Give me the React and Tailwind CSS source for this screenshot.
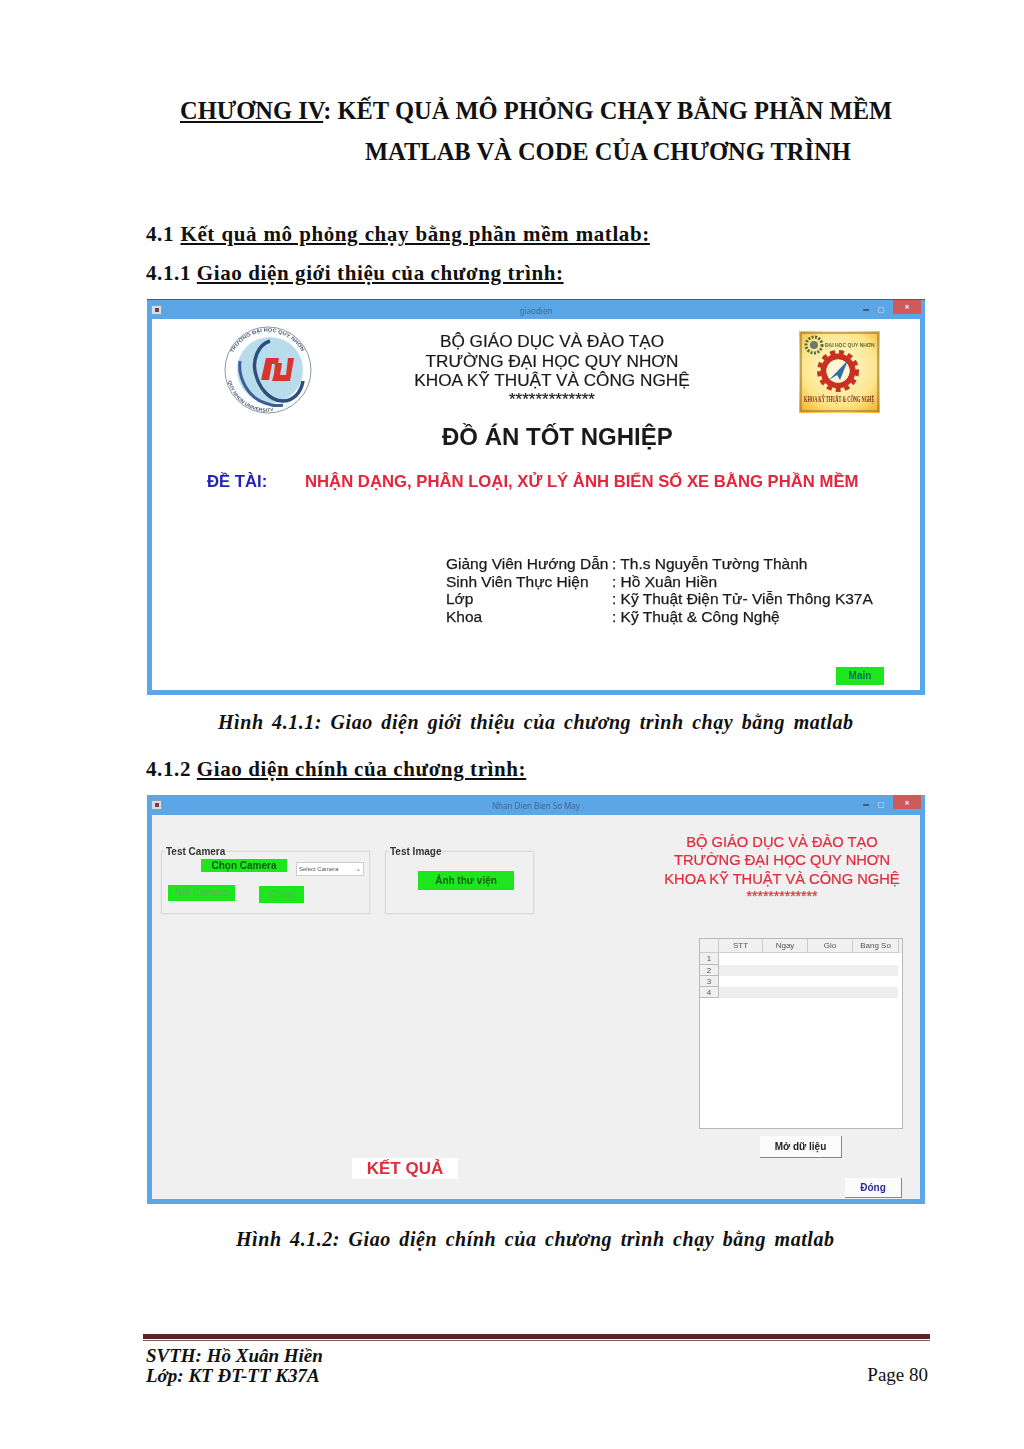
import React from 'react';

const serif = { fontFamily: '"Liberation Serif", "Times New Roman", serif' };

// --- logos ---
const UniLogo = () => (
  <svg width="90" height="90" viewBox="0 0 90 90" className="shrink-0">
    <defs>
      <path id="ringTop" d="M10 28 A39 39 0 0 1 82 34" />
      <path id="ringBottom" d="M5 56 A41 41 0 0 0 62 83" />
    </defs>
    <circle cx="45" cy="45" r="43" fill="#fff" stroke="#8a98a8" strokeWidth="1" />
    <circle cx="47" cy="45" r="33" fill="#b9dcec" />
    <text fontSize="5" fontWeight="700" fill="#4a5a74" fontFamily="Liberation Sans, sans-serif">
      <textPath href="#ringTop" textLength="84" lengthAdjust="spacingAndGlyphs">TRƯỜNG ĐẠI HỌC QUY NHƠN</textPath>
    </text>
    <text fontSize="4.6" fontWeight="700" fill="#4a5a74" fontFamily="Liberation Sans, sans-serif">
      <textPath href="#ringBottom" textLength="60" lengthAdjust="spacingAndGlyphs">QUY NHON UNIVERSITY</textPath>
    </text>
    <path d="M17 36 C15 52 24 72 42 78 C50 81 56 81 60 80" fill="none" stroke="#3a5f98" strokeWidth="3" />
    <path d="M47 16 C34 20 30 36 32 46 C35 62 46 76 60 76 C70 76 78 68 80 56" fill="none" stroke="#2f4e7c" strokeWidth="3.5" />
    <path d="M43 33 L56 33 L55 39 L49 39 L46 55 L38 55 Z" fill="#d8352f" />
    <path d="M59 38 L57 50 L63 50 L65 33 L71 33 L67 56 L49 56 L51 49 L52 38 Z" fill="#d8352f" />
  </svg>
);

const FacultyLogo = () => (
  <svg width="81" height="82" viewBox="0 0 81 82" className="shrink-0">
    <defs>
      <radialGradient id="gold" cx="50%" cy="45%" r="70%">
        <stop offset="0%" stopColor="#fffbe0" />
        <stop offset="65%" stopColor="#fde58a" />
        <stop offset="100%" stopColor="#f5b324" />
      </radialGradient>
    </defs>
    <rect x="0" y="0" width="81" height="82" fill="url(#gold)" />
    <rect x="2" y="2" width="77" height="78" fill="none" stroke="#8a6a38" strokeWidth="1" />
    <circle cx="15" cy="14" r="8" fill="none" stroke="#4f6b3a" strokeWidth="3" strokeDasharray="2 1.5" />
    <circle cx="15" cy="14" r="4" fill="#6b7a68" />
    <text x="26" y="16" fontSize="5" fontWeight="700" fill="#5e6a38" fontFamily="Liberation Sans, sans-serif">ĐẠI HỌC QUY NHƠN</text>
    <circle cx="39" cy="40" r="19" fill="none" stroke="#c9301f" strokeWidth="4" strokeDasharray="5 4" />
    <circle cx="39" cy="40" r="14.5" fill="none" stroke="#c9301f" strokeWidth="6" />
    <circle cx="39" cy="40" r="11.5" fill="#fff6d8" />
    <path d="M49 29 L41 49 L38 44 L30 49 Z" fill="#2f6fa8" />
    <g transform="translate(5 71) scale(0.55 1)">
      <text fontSize="8" fontWeight="700" fill="#7a2a1a" fontFamily="Liberation Serif, serif">KHOA KỸ THUẬT &amp; CÔNG NGHỆ</text>
    </g>
  </svg>
);

// --- window chrome ---
const Titlebar = ({ title, edge }) => (
  <div className={`h-[20px] shrink-0 flex items-center pl-[4px] pr-[4px] bg-[#5aa6e6] ${edge}`}>
    <div className="w-[70px]">
      <div className="w-[11px] h-[10px] bg-[#d5dee6] border border-[#8ba3b6] flex items-center justify-center">
        <div className="w-[4px] h-[4px] bg-[#7a4040]" />
      </div>
    </div>
    <div className="flex-1 text-center text-[8px] text-[#44688a] pt-[2px]">{title}</div>
    <div className="w-[70px] flex items-center justify-end gap-[9px]">
      <div className="w-[6px] h-[2px] bg-[#44607a]" />
      <div className="w-[6px] h-[6px] border border-[#9cc4e6]" />
      <div className="w-[28px] h-[14px] -mt-[6px] bg-[#cf5a5a] flex items-center justify-center text-white text-[9px] font-bold leading-none">×</div>
    </div>
  </div>
);

const GroupBox = ({ title, className, children }) => (
  <div className={`relative border border-[#d9d9d9] shadow-[0_0_1px_#ccc] ${className}`}>
    <span className="absolute -top-[6px] left-[3px] bg-[#f0f0f0] text-[10px] leading-[12px] font-bold text-[#333] px-[1px]">{title}</span>
    {children}
  </div>
);

const Section = ({ children, spread }) => (
  <div style={serif} className={`text-[21px] leading-[24px] font-bold tracking-[0.6px] text-[#111] decoration-2 ${spread}`}>{children}</div>
);

const Caption = ({ children, pad }) => (
  <div style={serif} className={`text-[20px] leading-[24px] font-bold italic tracking-[0.55px] text-[#111] [word-spacing:3px] ${pad}`}>{children}</div>
);

const rows = [
  ['Giảng Viên Hướng Dẫn', ': Th.s Nguyễn Tường Thành'],
  ['Sinh Viên Thực Hiện', ': Hồ Xuân Hiền'],
  ['Lớp', ': Kỹ Thuật Điện Tử- Viễn Thông K37A'],
  ['Khoa', ': Kỹ Thuật & Công Nghệ'],
];

const IntroWindow = () => (
  <div className="w-[778px] h-[396px] bg-[#5aa6e6] flex flex-col blur-[0.4px]">
    <Titlebar title="giaodien" edge="border-t border-[#3f5f7a]" />
    <div className="flex-1 mx-[5px] mb-[5px] bg-white flex flex-col" style={{ fontFamily: '"Liberation Sans", Arial, sans-serif' }}>
      <div className="flex items-start pt-[6px] pl-[71px]">
        <UniLogo />
        <div className="w-[400px] ml-[39px] pt-[7px] text-center text-[17.2px] leading-[19.5px] text-[#1a1a1a] [-webkit-text-stroke:0.2px_#1a1a1a]">
          <div>BỘ GIÁO DỤC VÀ ĐÀO TẠO</div>
          <div>TRƯỜNG ĐẠI HỌC QUY NHƠN</div>
          <div>KHOA KỸ THUẬT VÀ CÔNG NGHỆ</div>
          <div className="text-[17px] leading-[14px] mt-[2px]">*************</div>
        </div>
        <div className="ml-[47px] pt-[6px]"><FacultyLogo /></div>
      </div>
      <div className="mt-[7px] pl-[290px] text-[24px] leading-[30px] font-bold text-[#1a1a1a]">ĐỒ ÁN TỐT NGHIỆP</div>
      <div className="mt-[20px] flex pl-[55px] text-[16.7px] leading-[20px] font-bold">
        <span className="w-[98px] text-[#2222bb]">ĐỀ TÀI:</span>
        <span className="text-[#e8243c]">NHẬN DẠNG, PHÂN LOẠI, XỬ LÝ ẢNH BIỂN SỐ XE BẰNG PHẦN MỀM</span>
      </div>
      <div className="mt-[63px] ml-[294px] text-[15.5px] leading-[17.7px] text-[#1a1a1a] [-webkit-text-stroke:0.25px_#1a1a1a]">
        {rows.map(([k, v]) => (
          <div key={k} className="flex">
            <span className="w-[166px]">{k}</span>
            <span>{v}</span>
          </div>
        ))}
      </div>
      <div className="flex justify-end mt-[41px] pr-[36px]">
        <div className="w-[48px] h-[18px] bg-[#1ee61e] text-[#0a6a5a] text-[10px] leading-[18px] font-bold text-center">Main</div>
      </div>
    </div>
  </div>
);

const MainWindow = () => (
  <div className="w-[778px] h-[409px] bg-[#5aa6e6] flex flex-col blur-[0.4px]">
    <Titlebar title="Nhan Dien Bien So May" />
    <div className="flex-1 mx-[5px] mb-[5px] bg-[#f0f0f0] flex" style={{ fontFamily: '"Liberation Sans", Arial, sans-serif' }}>
      <div className="w-[510px] flex flex-col">
        <div className="flex pt-[36px] pl-[9px] gap-[15px]">
          <GroupBox title="Test Camera" className="w-[209px] h-[63px] pt-[7px] pl-[6px]">
            <div className="flex items-start pl-[33px]">
              <div className="w-[86px] h-[13px] bg-[#1ee61e] text-[#0e5a0e] text-[10px] leading-[13px] font-bold text-center">Chọn Camera</div>
              <div className="w-[68px] h-[14px] ml-[9px] mt-[3px] bg-white border border-[#ccc] flex items-center justify-between px-[2px] text-[6px] text-[#555]">
                <span>Select Camera</span><span>⌄</span>
              </div>
            </div>
            <div className="flex items-start mt-[9px]">
              <div className="w-[67px] h-[16px] bg-[#1ee61e] text-[#5ab05a] text-[10px] leading-[16px] text-center">Nối Camera</div>
              <div className="w-[45px] h-[17px] ml-[24px] mt-[1px] bg-[#1ee61e] text-[#5ab05a] text-[10px] leading-[17px] text-center">Chụp</div>
            </div>
          </GroupBox>
          <GroupBox title="Test Image" className="w-[149px] h-[63px] pt-[19px] pl-[32px]">
            <div className="w-[96px] h-[19px] bg-[#1ee61e] text-[#145c14] text-[10px] leading-[19px] font-bold text-center">Ảnh thư viện</div>
          </GroupBox>
        </div>
        <div className="mt-[244px] ml-[200px] w-[106px] h-[21px] bg-white text-[#e02c3c] text-[17px] leading-[21px] font-bold text-center">KẾT QUẢ</div>
      </div>
      <div className="flex-1 flex flex-col">
        <div className="pt-[18px] w-[240px] text-center text-[14.7px] leading-[18.4px] text-[#e02c3c] [-webkit-text-stroke:0.2px_#e02c3c]">
          <div>BỘ GIÁO DỤC VÀ ĐÀO TẠO</div>
          <div>TRƯỜNG ĐẠI HỌC QUY NHƠN</div>
          <div>KHOA KỸ THUẬT VÀ CÔNG NGHỆ</div>
          <div className="text-[14px] leading-[12px] mt-[2px]">*************</div>
        </div>
        <div className="ml-[37px] mt-[36px] w-[204px] h-[191px] bg-white border border-[#b8b8b8] text-[8px] text-[#555]">
          <div className="flex h-[14px] bg-[#f0f0f0]">
            {[['', 'w-[19px]'], ['STT', 'w-[44px]'], ['Ngay', 'w-[45px]'], ['Gio', 'w-[45px]'], ['Bang So', 'w-[46px]']].map(([h, w]) => (
              <div key={h} className={`${w} border-r border-b border-[#ccc] text-center leading-[14px]`}>{h}</div>
            ))}
          </div>
          {[1, 2, 3, 4].map(n => (
            <div key={n} className="flex h-[11.3px]">
              <div className="w-[19px] bg-[#f0f0f0] border-r border-b border-[#bbb] text-center leading-[11px]">{n}</div>
              <div className={`w-[179px] ${n % 2 === 0 ? 'bg-[#eeeeee]' : 'bg-white'}`} />
            </div>
          ))}
        </div>
        <div className="ml-[98px] mt-[7px] w-[82px] h-[22px] bg-[#fbfbfb] border-r border-b border-[#888] text-[#222] text-[10px] leading-[22px] font-bold text-center">Mở dữ liệu</div>
        <div className="ml-[183px] mt-[20px] w-[57px] h-[20px] bg-[#fbfbfb] border-r border-b border-[#888] text-[#2c2c9c] text-[10px] leading-[20px] font-bold text-center">Đóng</div>
      </div>
    </div>
  </div>
);

export default function App() {
  return (
    <div className="w-[1024px] h-[1449px] bg-white relative overflow-hidden">
      <div style={serif} className="pt-[90px] text-[24.5px] leading-[41px] font-bold text-[#111]">
        <div className="pl-[180px]"><span className="underline">CHƯƠNG IV</span>: KẾT QUẢ MÔ PHỎNG CHẠY BẰNG PHẦN MỀM</div>
        <div className="pl-[365px]">MATLAB VÀ CODE CỦA CHƯƠNG TRÌNH</div>
      </div>

      <div className="pl-[146px] mt-[50px]">
        <Section spread="[word-spacing:0.6px]">4.1 <span className="underline">Kết quả mô phỏng chạy bằng phần mềm matlab:</span></Section>
        <div className="mt-[15px]"><Section>4.1.1 <span className="underline">Giao diện giới thiệu của chương trình:</span></Section></div>
        <div className="pl-[1px] mt-[14px]"><IntroWindow /></div>
        <div className="mt-[15px]"><Caption pad="pl-[72px]">Hình 4.1.1: Giao diện giới thiệu của chương trình chạy bằng matlab</Caption></div>
        <div className="mt-[23px]"><Section>4.1.2 <span className="underline">Giao diện chính của chương trình:</span></Section></div>
        <div className="pl-[1px] mt-[14px]"><MainWindow /></div>
        <div className="mt-[23px]"><Caption pad="pl-[90px]">Hình 4.1.2: Giao diện chính của chương trình chạy bằng matlab</Caption></div>
      </div>

      <div className="ml-[143px] w-[787px] mt-[83px]">
        <div className="h-[5px] bg-[#5c2424]" />
        <div className="h-[1px] mt-[1px] bg-[#8a5a5a]" />
      </div>
      <div style={serif} className="ml-[146px] w-[782px] mt-[5px] flex justify-between items-end text-[19px] leading-[20px] text-[#111]">
        <div className="font-bold italic">
          <div>SVTH: Hồ Xuân Hiền</div>
          <div>Lớp: KT ĐT-TT K37A</div>
        </div>
        <div className="mb-[1px]">Page 80</div>
      </div>
    </div>
  );
}
